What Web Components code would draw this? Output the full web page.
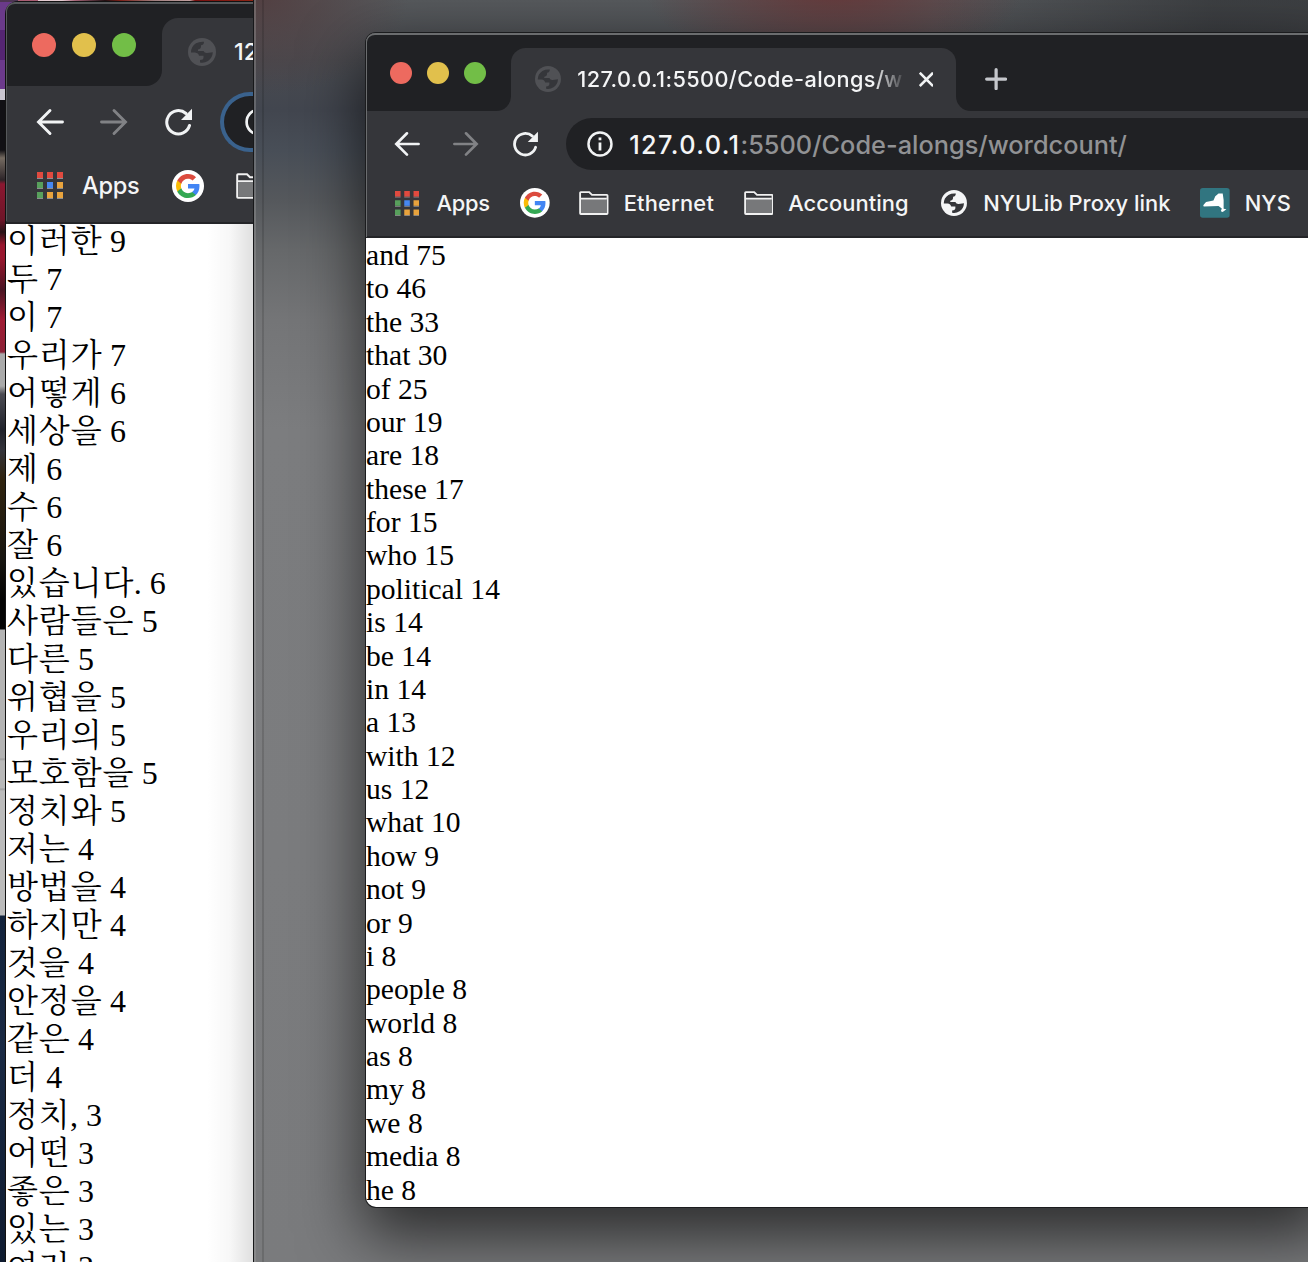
<!DOCTYPE html>
<html lang="en">
<head>
<meta charset="utf-8">
<title>Word count</title>
<style>
html,body{margin:0;height:100%;overflow:hidden;background:#222}
</style>
</head>
<body>
<desk-top></desk-top>
<script>
const define=(name,html,init)=>customElements.define(name,class extends HTMLElement{
  constructor(){super();this.attachShadow({mode:'open'}).innerHTML=html;}
  connectedCallback(){if(init)init.call(this,this.shadowRoot);}
});

/* Text run spaced to an exact width, given in window units */
define('fit-text',`<style>:host{display:block;flex:none;white-space:nowrap}span{display:inline-block;white-space:nowrap}</style><span><slot></slot></span>`,function(r){
  const k=parseFloat(getComputedStyle(this).getPropertyValue('--k'))||1;
  const w=+this.getAttribute('w')*k, s=r.querySelector('span');
  this.style.width=w+'px';
  s.style.letterSpacing=((w-s.getBoundingClientRect().width)/this.textContent.length)+'px';
});

const icons={
 back:['0 0 28 28','<path d="M26.500 14H3M14 2.500 2.500 14 14 25.500" fill="none" stroke="#f1f3f4" stroke-width="2.900" stroke-linecap="round" stroke-linejoin="miter"/>'],
 forward:['0 0 28 28','<path d="M1.500 14H25M14 2.500 25.500 14 14 25.500" fill="none" stroke="#818285" stroke-width="2.900" stroke-linecap="round"/>'],
 reload:['0 0 28 28','<path d="M25.500 17.500A11.600 11.600 0 1 1 22 5.500" fill="none" stroke="#f1f3f4" stroke-width="3" stroke-linecap="round"/><path d="M28 .8V12H17Z" fill="#f1f3f4"/>'],
 apps:['0 0 26 27',['#e04a3f','#e04a3f','#e04a3f','#58a05c','#4688f1','#e8a33d','#58a05c','#e8a33d','#e8a33d'].map((c,i)=>{const x=i%3*10,y=(i/3|0)*10;return `<rect x="${x}" y="${y+6}" width="6" height="1" fill="#8d8e91"/><rect x="${x}" y="${y}" width="6" height="6" fill="${c}"/>`}).join('')],
 google:['0 0 32 32','<circle cx="16" cy="16" r="16" fill="#fff"/><g transform="translate(4 4)"><path d="M23.490 12.270c0-.79-.07-1.540-.19-2.270H12v4.510h6.470c-.29 1.480-1.140 2.730-2.400 3.580v3h3.860c2.260-2.090 3.560-5.170 3.560-8.820z" fill="#4285f4"/><path d="M12 24c3.240 0 5.950-1.080 7.930-2.910l-3.860-3c-1.080.72-2.450 1.160-4.070 1.160-3.130 0-5.780-2.110-6.730-4.960H1.290v3.090C3.260 21.300 7.310 24 12 24z" fill="#34a853"/><path d="M5.270 14.290c-.25-.72-.38-1.490-.38-2.290s.14-1.570.38-2.290V6.620H1.290C.47 8.240 0 10.060 0 12s.47 3.760 1.290 5.380z" fill="#fbbc05"/><path d="M12 4.750c1.770 0 3.350.61 4.600 1.800l3.420-3.420C17.950 1.190 15.240 0 12 0 7.310 0 3.260 2.700 1.290 6.620l3.980 3.090C6.220 6.860 8.870 4.750 12 4.750z" fill="#dc4b3e"/></g>'],
 folder:['0 0 32 26','<path d="M1.200 24V2Q1.200 1.200 2 1.200H11L14 4.200H30Q30.800 4.200 30.800 5V24Q30.800 24.800 30 24.800H2Q1.200 24.800 1.200 24Z" fill="#35363a" stroke="#f1f1f1" stroke-width="2"/><path d="M2.200 8.500H29.800V23.800H2.200Z" fill="#77787a"/><path d="M2 8.200H30" stroke="#f1f1f1" stroke-width="1.800"/>'],
 globe:['0 0 28 28','<circle cx="14" cy="14" r="14" fill="currentColor"/><path d="M3 14.500Q3 8.500 8 5.300 11.500 3.400 16 3.800 16 7 13 7.300 13.500 11 10 11.500V13H15.500Q16.500 15.200 19 15L24.800 14.300Q24.500 20 20 23 16 25.500 12 24.500V22Q15.500 22 15.500 19.500V17.800H11Q10.500 15 7 14.500Z" fill="#35363a"/>'],
 nys:['0 0 32 32','<rect width="32" height="32" rx="3" fill="#317580"/><path d="M3.500 18.500 6.500 15 14.500 13.500 16.500 9 20 6H24.500L25.500 13V22.500L28.500 23 24.500 26 22.500 25 23.500 22 20 19.500 4 20Z" fill="#fff"/>'],
 info:['0 0 28 28','<circle cx="14" cy="14" r="12.400" fill="none" stroke="#f1f3f4" stroke-width="2.700"/><path d="M12.500 12.500H15.500V21H12.500ZM12.500 7H15.500V10H12.500Z" fill="#f1f3f4"/>'],
 close:['0 0 16 16','<path d="M.8 .8 15.200 15.200M15.200 .8 .8 15.200" stroke="#f1f3f4" stroke-width="2.800"/>'],
 plus:['0 0 24 24','<path d="M12 1.800V22.200M1.800 12H22.200" stroke="#c5c7cc" stroke-width="3.500" stroke-linecap="round"/>']
};
/* Toolbar glyph; width and height are in window units */
define('ui-icon',`<style>:host{display:block;flex:none}svg{display:block;width:100%;height:100%}</style>`,function(r){
  const [vb,body]=icons[this.getAttribute('name')];
  const [, ,w,h]=vb.split(' ');
  this.style.width=`calc(var(--u)*${this.getAttribute('w')||w})`;
  this.style.height=`calc(var(--u)*${this.getAttribute('h')||h})`;
  r.innerHTML+=`<svg viewBox="${vb}">${body}</svg>`;
});

define('traffic-lights',`<style>:host{display:flex;gap:calc(var(--u)*16)}i{width:calc(var(--u)*24);height:calc(var(--u)*24);border-radius:50%;background:#ed6a5f}i+i{background:#e1c04c}i+i+i{background:#72be47}</style><i></i><i></i><i></i>`);

define('book-mark',`<style>:host{display:flex;align-items:center;gap:calc(var(--u)*16);flex:none;color:#f4f5f6}</style><slot></slot>`);

define('browser-window',`<style>
:host{display:flex;flex-direction:column;--u:calc(var(--k)*1px);font-family:Inter,"Liberation Sans",sans-serif;font-weight:500;color:#f4f5f6;background:#fff;overflow:hidden;box-sizing:border-box}
.tabs{display:flex;height:calc(var(--u)*84);background:#35363a;flex:none}
.left{width:calc(var(--u)*156);flex:none;background:#202124;border-bottom-right-radius:calc(var(--u)*16);padding:calc(var(--u)*31) 0 0 calc(var(--u)*26);box-sizing:border-box}
.mid{width:calc(var(--u)*480);flex:none;background:#202124;padding-top:calc(var(--u)*16);box-sizing:border-box;display:flex}
.tab{flex:1;background:#35363a;border-radius:calc(var(--u)*16) calc(var(--u)*16) 0 0;display:flex;align-items:center;padding:0 calc(var(--u)*24) 0 calc(var(--u)*26);box-sizing:border-box;font-size:calc(var(--u)*23.4)}
.tab ui-icon:first-child{color:#505155}
.title{margin-left:calc(var(--u)*18);-webkit-mask:linear-gradient(90deg,#000 91%,transparent 101%);mask:linear-gradient(90deg,#000 91%,transparent 101%)}
:host([compact]) .title{-webkit-mask:none;mask:none;margin-top:-2px}
.x{margin-left:auto}
.rest{flex:1;background:#202124;border-bottom-left-radius:calc(var(--u)*16);padding:calc(var(--u)*37.500) 0 0 calc(var(--u)*32)}
.tools{display:flex;align-items:center;height:calc(var(--u)*72);background:#35363a;flex:none;padding-left:calc(var(--u)*30);gap:calc(var(--u)*36)}
.omni{margin-left:calc(var(--u)*-6);flex:1 0 auto;height:calc(var(--u)*56);border-radius:calc(var(--u)*30) 0 0 calc(var(--u)*30);background:#202124;display:flex;align-items:center;padding-left:calc(var(--u)*22);font-size:calc(var(--u)*27.300);box-sizing:border-box}
:host([compact]) .omni{border:4px solid #3a628d;border-right:0;height:60px;margin-left:-8px;padding-left:21px}
.omni .host{margin-left:calc(var(--u)*18)}
.omni .path{color:#919294}
.marks{display:flex;align-items:center;height:calc(var(--u)*56);padding:0 0 calc(var(--u)*8 - var(--trim)) calc(var(--u)*31);background:#35363a;border-bottom:2px solid #242528;flex:none;font-size:calc(var(--u)*23.600)}
.marks book-mark{margin-top:-1px}
.f{margin-left:calc(var(--u)*32)}
</style>
<div class="tabs"><div class="left"><traffic-lights></traffic-lights></div>
<div class="mid"><div class="tab"><ui-icon name="globe"></ui-icon><fit-text class="title" w="351">127.0.0.1:5500/Code-alongs/w</fit-text><ui-icon class="x" name="close" w="16" h="16"></ui-icon></div></div>
<div class="rest"><ui-icon name="plus"></ui-icon></div></div>
<div class="tools"><ui-icon name="back"></ui-icon><ui-icon name="forward"></ui-icon><ui-icon name="reload"></ui-icon>
<div class="omni"><ui-icon name="info"></ui-icon><fit-text class="host wide" w="120">127.0.0.1</fit-text><fit-text class="path wide" w="417">:5500/Code-alongs/wordcount/</fit-text></div></div>
<div class="marks">
<book-mark><ui-icon name="apps"></ui-icon><fit-text style="margin-left:calc(var(--u)*3)" w="57.500">Apps</fit-text></book-mark>
<book-mark style="margin-left:calc(var(--u)*32.500)"><ui-icon name="google"></ui-icon></book-mark>
<book-mark class="f"><ui-icon name="folder"></ui-icon><fit-text class="wide" w="97.500">Ethernet</fit-text></book-mark>
<book-mark class="f wide"><ui-icon name="folder"></ui-icon><fit-text w="130">Accounting</fit-text></book-mark>
<book-mark class="wide" style="margin-left:calc(var(--u)*34.500)"><ui-icon name="globe"></ui-icon><fit-text style="margin-left:calc(var(--u)*2)" w="202">NYULib Proxy link</fit-text></book-mark>
<book-mark class="f wide"><ui-icon name="nys"></ui-icon><fit-text w="50">NYS</fit-text></book-mark>
</div>
<slot></slot>`,function(r){
  if(!this.hasAttribute('compact'))return;
  r.querySelectorAll('.wide').forEach(e=>e.remove());
  const t=document.createElement('fit-text');t.className='title';t.setAttribute('w','24');t.textContent='12';
  r.querySelector('.title').replaceWith(t);
});

define('word-list',`<style>:host{display:block;color:#000;font-weight:400;font-family:"Liberation Serif",serif;white-space:nowrap}
div{height:var(--row);line-height:var(--row);font-size:var(--fs)}
span{display:inline-block;line-height:var(--row);font-family:"Noto Serif CJK KR","Noto Sans CJK KR",serif;font-weight:400;letter-spacing:.03em;margin-right:-.7px}</style>`,function(r){
  const ko=this.hasAttribute('korean');
  for(const line of this.textContent.trim().split('|')){
    const d=document.createElement('div');
    const m=ko&&line.match(/^([가-힣]+)(.*)$/);
    if(m){const s=document.createElement('span');s.textContent=m[1];d.append(s,m[2]);}
    else d.textContent=line;
    r.append(d);
  }
});

define('desk-top',`<style>
:host{display:block;position:relative;width:100vw;height:100vh;overflow:hidden;
 background:linear-gradient(#6a3a8a 0 30px,#552573 30px 60px,#6c3a8c 60px 89px,#c9c5cf 89px 100px,#111014 100px 150px,#756b61 158px,#2c2428 180px,#8b1730 184px,#6d1528 220px,#281318 232px,#99172f 245px 258px,#4a1523 290px,#a01c34 320px,#8b2136 352px,#aaa 354px 386px,#4b4b52 394px,#20222b 430px,#33333a 450px,#30230f 480px,#171510 560px,#030303 600px 629px,#b3b3b3 630px 758px,#999 759px,#b8b8b8 761px 788px,#999 789px,#bbb 791px 915px,#12223b 916px,#1a2a44 1050px,#0e1b30)}
.strip{position:absolute;left:0;top:0;width:254px;height:2px;background:linear-gradient(90deg,#4d3553 0 18px,#aa5d73 18px 38px,#e4ccd2 38px 62px,#a8667a 75px,#221013 105px,#7c2018 120px,#a08080 155px,#c2a0a0 190px,#711 195px,#8d2515)}
.one{position:absolute;left:6px;top:2px;width:248px;height:1260px;--k:1;--trim:0px;border-radius:12px 0 0 0;box-shadow:0 0 0 1px #111}
.one word-list,.two word-list{flex:none}
.one word-list{--row:38px;--fs:32px;margin-top:-5px;padding-left:1px}
.two word-list{--row:33.390px;--fs:29.600px;margin-top:1px}
.shade{position:absolute;left:207px;top:224px;width:46px;height:1038px;background:linear-gradient(90deg,transparent,#00000008 50%,#00000020)}
.glass{position:absolute;left:253px;top:0;width:1055px;height:1262px;border-left:1px solid #17181a;box-sizing:border-box;
 background:linear-gradient(90deg,#a5a5a555 0 2px,transparent 2px 8px,#00000022 8px 10px,transparent 10px),
 radial-gradient(ellipse 190px 90px at 580px -15px,#693334dd,transparent),
 radial-gradient(ellipse 150px 100px at 5px -5px,#51393bcc,transparent),
 linear-gradient(90deg,transparent 680px,#2c2e3199 960px) top/100% 60px no-repeat,
 linear-gradient(#56595c 0,#494b50 60px,#42464f 110px,#484e57 150px,#55585c 200px,#66686a 250px,#747577 320px,#7c7d7f 430px,#7b7c7e 850px,#7a7b7d 1262px)}
.two{position:absolute;left:366px;top:33px;width:960px;height:1174px;--k:.927;--trim:.9px;border-radius:10px 0 0 10px;box-shadow:0 0 0 1px #1b1c1e,0 26px 62px 4px rgba(0,0,0,.64)}
.edge{position:absolute;left:366px;top:33px;width:960px;height:204px;border:1px solid #6b6d6f;border-width:2px 0 0 1px;border-top-left-radius:9px;box-sizing:border-box}
.edge.a{left:6px;top:2px;width:247px;height:219px;border-color:#56585b}
</style>
<div class="strip"></div>
<browser-window class="one" compact><word-list korean>이러한 9|두 7|이 7|우리가 7|어떻게 6|세상을 6|제 6|수 6|잘 6|있습니다. 6|사람들은 5|다른 5|위협을 5|우리의 5|모호함을 5|정치와 5|저는 4|방법을 4|하지만 4|것을 4|안정을 4|같은 4|더 4|정치, 3|어떤 3|좋은 3|있는 3|여러 3</word-list></browser-window>
<div class="edge a"></div>
<div class="shade"></div>
<div class="glass"></div>
<browser-window class="two"><word-list>and 75|to 46|the 33|that 30|of 25|our 19|are 18|these 17|for 15|who 15|political 14|is 14|be 14|in 14|a 13|with 12|us 12|what 10|how 9|not 9|or 9|i 8|people 8|world 8|as 8|my 8|we 8|media 8|he 8</word-list></browser-window>
<div class="edge"></div>`);
</script>
</body>
</html>
